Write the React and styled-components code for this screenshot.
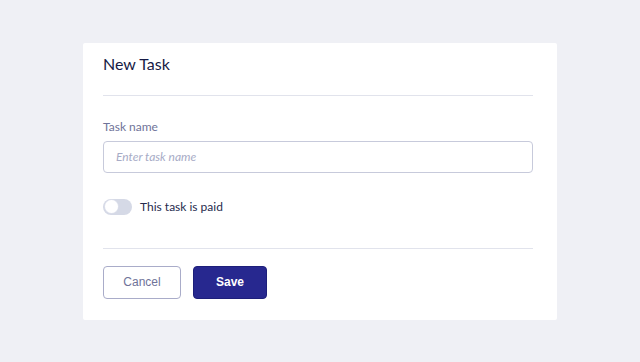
import styled, { createGlobalStyle } from "styled-components";

const GlobalStyle = createGlobalStyle`
  html, body {
    margin: 0;
    padding: 0;
    background-color: #eff0f5;
    font-family: Lato, Inter, "Liberation Sans", sans-serif;
  }
`;

const Page = styled.div`
  min-height: 100vh;
  display: flex;
  align-items: center;
  justify-content: center;
`;

const Card = styled.div`
  width: 474px;
  box-sizing: border-box;
  background-color: #ffffff;
  border-radius: 2px;
  padding: 0 24px 0 20px;
`;

const Header = styled.div`
  padding: 11px 0 21px;
  border-bottom: 1px solid #e1e3ec;
`;

const Title = styled.h2`
  margin: 0;
  font-size: 16px;
  line-height: 20px;
  font-weight: 400;
  color: #161a45;
`;

const Body = styled.div`
  padding: 23px 0 33px;
  border-bottom: 1px solid #e1e3ec;
  display: flex;
  flex-direction: column;
`;

const Label = styled.label`
  font-size: 12px;
  line-height: 16px;
  color: #6f7399;
  margin-bottom: 6px;
`;

const Input = styled.input`
  height: 32px;
  box-sizing: border-box;
  border: 1px solid #c7cadb;
  border-radius: 4px;
  padding: 0 12px;
  font-family: Lato, Inter, "Liberation Sans", sans-serif;
  font-size: 12px;
  color: #141738;
  outline: none;
  &::placeholder {
    color: #a7abc6;
    font-style: italic;
  }
`;

const ToggleRow = styled.div`
  display: flex;
  align-items: center;
  gap: 8px;
  margin-top: 26px;
`;

const Track = styled.div`
  width: 29px;
  height: 16px;
  border-radius: 8px;
  background-color: ${(p) => (p.on ? "#27288f" : "#d5d9e6")};
  display: flex;
  align-items: center;
  padding: 0 2px;
  box-sizing: border-box;
  justify-content: ${(p) => (p.on ? "flex-end" : "flex-start")};
`;

const Knob = styled.div`
  width: 13px;
  height: 13px;
  border-radius: 50%;
  background-color: #ffffff;
  box-shadow: 0 0 0 0.5px #e3e6ef;
`;

const ToggleText = styled.span`
  font-size: 12px;
  line-height: 16px;
  color: #262a4d;
`;

const Footer = styled.div`
  display: flex;
  gap: 12px;
  padding: 17px 0 21px;
`;

const Button = styled.button`
  height: 33px;
  padding: 0;
  width: ${(p) => (p.primary ? "74px" : "78px")};
  border-radius: 4px;
  font-family: "Liberation Sans", Arial, sans-serif;
  font-size: 12px;
  font-weight: ${(p) => (p.primary ? 700 : 400)};
  border: 1px solid ${(p) => (p.primary ? "#1d1f7a" : "#a9acc9")};
  background-color: ${(p) => (p.primary ? "#27288f" : "#ffffff")};
  color: ${(p) => (p.primary ? "#ffffff" : "#6f7399")};
`;

export default function App() {
  return (
    <>
      <GlobalStyle />
      <Page>
        <Card>
          <Header>
            <Title>New Task</Title>
          </Header>
          <Body>
            <Label>Task name</Label>
            <Input placeholder="Enter task name" />
            <ToggleRow>
              <Track>
                <Knob />
              </Track>
              <ToggleText>This task is paid</ToggleText>
            </ToggleRow>
          </Body>
          <Footer>
            <Button>Cancel</Button>
            <Button primary>Save</Button>
          </Footer>
        </Card>
      </Page>
    </>
  );
}
